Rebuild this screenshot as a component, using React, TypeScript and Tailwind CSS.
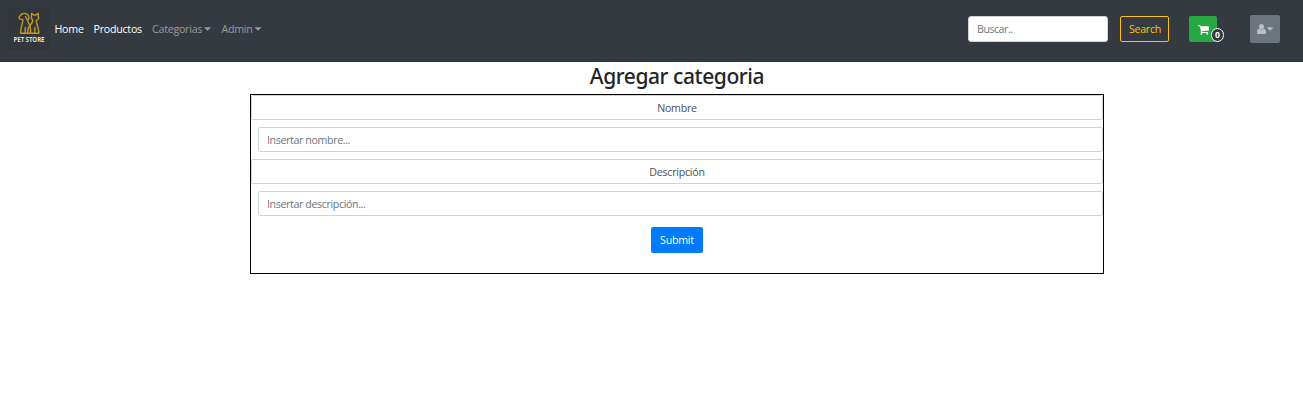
import type { ReactNode } from "react";

function Caret({ className = "" }: { className?: string }) {
  return (
    <span
      className={`inline-block h-[3.5px] w-[7px] bg-current [clip-path:polygon(0_0,100%_0,50%_100%)] ${className}`}
    />
  );
}

function Logo() {
  return (
    <div className="flex h-[42px] w-[42px] flex-col items-center bg-[#33373b] pt-[4px]">
      <svg width="22" height="23" viewBox="0 0 22 23" fill="none" stroke="#c09a22" strokeWidth="1.4" strokeLinejoin="round" strokeLinecap="round">
        <path d="M4 1.8 1 5.2C.8 6.8 2 7.6 5 7.6 5 11 2.6 14 2.6 21.3H7.2V15.5M4 1.8C7 .8 10.5 1.5 11 5.5 11.2 8 9.2 8.4 8.4 6.6L7.6 4.6M9.6 8.2C10.5 12 12.6 14 12.6 17.5V21.3H7.2" />
        <path d="M13.4 6 13.6 1.4 15.8 3H18L20.2 1.4 20.6 6.4 18.2 9C18.6 13 20.8 15 20.8 21.3H12.6M13.4 6 14.8 8.6C14.6 12 9.8 14 9.8 18.5V21.3M16.8 15.5V21.3" />
      </svg>
      <span className="mt-px whitespace-nowrap font-['Open_Sans',sans-serif] text-[6.2px] leading-[8px] font-bold tracking-[-0.12px] text-[#dcdddf]">
        PET STORE
      </span>
    </div>
  );
}

function CartIcon() {
  return (
    <svg width="11" height="10" viewBox="0 256 1664 1408" fill="currentColor" className="mt-px">
      <path d="M640 1536q0 52-38 90t-90 38-90-38-38-90 38-90 90-38 90 38 38 90zm896 0q0 52-38 90t-90 38-90-38-38-90 38-90 90-38 90 38 38 90zm128-1088v512q0 24-16.5 42.5t-40.5 21.5l-1044 122q13 60 13 70 0 16-24 64h920q26 0 45 19t19 45-19 45-45 19h-1024q-26 0-45-19t-19-45q0-11 8-31.5t16-36 21.5-40 15.5-29.5l-177-823h-204q-26 0-45-19t-19-45 19-45 45-19h256q16 0 28.5 6.5t19.5 15.5 13 24.5 8 26 5.5 29.5 4.5 26h1201q26 0 45 19t19 45z" />
    </svg>
  );
}

function Dropdown({ children, className }: { children: ReactNode; className: string }) {
  return (
    <a className="flex items-center whitespace-nowrap">
      <span className={className}>{children}</span>
      <Caret />
    </a>
  );
}

function Field({ label, placeholder }: { label: string; placeholder: string }) {
  return (
    <>
      <label className="flex h-[25px] items-center justify-center rounded-[2px] border border-[#ced4da] text-[#495057]">
        {label}
      </label>
      <input
        type="text"
        placeholder={placeholder}
        className="my-[7px] ml-[7px] block h-[25px] w-[845px] rounded-[2px] border border-[#ced4da] px-2 tracking-[-0.38px] outline-none placeholder:text-[#6c757d]"
      />
    </>
  );
}

export default function App() {
  return (
    <div className="min-h-screen bg-white font-['Open_Sans','Noto_Sans',sans-serif] text-[10.67px] leading-4 tracking-[-0.25px] text-[#212529]">
      <nav className="flex h-[62px] items-start justify-between border-b border-[#303338] bg-[#343a40] pr-[23px] pl-[8px]">
        <div className="flex pt-[8px]">
          <Logo />
          <div className="flex h-[42px] items-center pl-[4.5px] text-[#999c9f]">
            <a className="w-[39px] whitespace-nowrap text-white">Home</a>
            <a className="w-[58.5px] whitespace-nowrap text-white">Productos</a>
            <div className="flex gap-[10.5px]">
              <Dropdown className="w-[52px]">Categorias</Dropdown>
              <Dropdown className="w-[33px]">Admin</Dropdown>
            </div>
          </div>
        </div>
        <div className="flex h-[58px] items-center">
          <input
            type="text"
            placeholder="Buscar.."
            className="h-[26px] w-[140px] rounded-[3px] border border-[#ced4da] bg-white px-2 tracking-[-0.5px] outline-none placeholder:text-[#6c757d]"
          />
          <button className="ml-3 h-[26px] w-[49px] rounded-[2px] border border-[#ffc107] pl-[1px] text-[#ffc107]">
            Search
          </button>
          <button className="relative ml-5 flex h-[26px] w-7 items-center justify-center rounded-[2px] bg-[#28a745] pl-[1px] text-white">
            <CartIcon />
            <span className="absolute top-[12px] left-[22px] flex h-[14px] w-[13px] items-center justify-center rounded-full border border-white bg-[#343a40] text-[8.5px] leading-none font-bold tracking-normal">
              0
            </span>
          </button>
          <button className="ml-[33px] flex h-7 w-[30px] items-center rounded-[2px] bg-[#6c757d] pl-[6.5px] text-[#b9bdc1]">
            <svg width="9" height="10" viewBox="0 0 9 10" fill="currentColor">
              <ellipse cx="4.5" cy="2.8" rx="2.5" ry="2.8" />
              <path d="M2 4.7C.5 5 0 6.5 0 8.4 0 9.4.6 10 1.6 10H7.4C8.4 10 9 9.4 9 8.4 9 6.5 8.5 5 7 4.7 5.6 6.2 3.4 6.2 2 4.7Z" />
            </svg>
            <Caret className="ml-[1px]" />
          </button>
        </div>
      </nav>

      <main className="ml-[250px] w-[854px]">
        <h1 className="h-8 pt-[1px] text-center font-['Noto_Sans',sans-serif] text-[21px] leading-[26px] font-medium tracking-[-0.42px]">
          Agregar categoria
        </h1>
        <form className="h-[180px] border border-black">
          <Field label="Nombre" placeholder="Insertar nombre..." />
          <Field label="Descripción" placeholder="Insertar descripción..." />
          <button
            type="button"
            className="mx-auto mt-[11px] block h-[26px] w-[52px] rounded-[2px] bg-[#007bff] text-white"
          >
            Submit
          </button>
        </form>
      </main>
    </div>
  );
}
